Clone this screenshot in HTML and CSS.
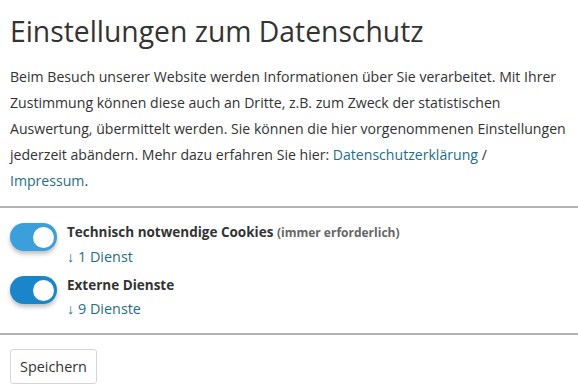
FILE: index.html
```html
<!DOCTYPE html>
<html lang="de">
<head>
<meta charset="utf-8"/>
<title>Einstellungen zum Datenschutz</title>
<link rel="stylesheet" href="styles.css">
</head>
<body>
  <div class="privacy">
    <div class="intro">
      <h1>Einstellungen zum Datenschutz</h1>
      <p>Beim Besuch unserer Website werden Informationen über Sie verarbeitet. Mit Ihrer Zustimmung können diese auch an Dritte, z.B. zum Zweck der statistischen Auswertung, übermittelt werden. Sie können die hier vorgenommenen Einstellungen jederzeit abändern. Mehr dazu erfahren Sie hier: <a href="#">Datenschutzerklärung</a> /<br><a href="#">Impressum</a>.</p>
    </div>

    <div class="groups">
      <div class="group">
        <span class="switch switch-light"><span class="knob"></span></span>
        <div class="group-text">
          <div class="group-title">Technisch notwendige Cookies <small>(immer erforderlich)</small></div>
          <a href="#" class="services">↓ 1 Dienst</a>
        </div>
      </div>
      <div class="group">
        <span class="switch"><span class="knob"></span></span>
        <div class="group-text">
          <div class="group-title">Externe Dienste</div>
          <a href="#" class="services">↓ 9 Dienste</a>
        </div>
      </div>
    </div>

    <div class="actions">
      <button class="save">Speichern</button>
    </div>
  </div>
</body>
</html>
```

FILE: styles.css
```css
html, body {
  margin: 0;
  background: #fff;
}
body {
  font-family: "Open Sans", "Liberation Sans", sans-serif;
  color: #333;
  font-size: 14.1px;
}
.intro {
  padding: 11px 10px 12px;
  border-bottom: 2px solid #b3b3b3;
}
h1 {
  font-weight: 400;
  font-size: 28.3px;
  margin: 0 0 13px;
  color: #333;
  line-height: 40px;
}
p {
  margin: 0;
  line-height: 26px;
}
a {
  color: #1f6e85;
  text-decoration: none;
}
.groups {
  padding: 12px 10px 12px;
  border-bottom: 2px solid #b3b3b3;
  display: flex;
  flex-direction: column;
  gap: 4px;
}
.group {
  display: flex;
  align-items: flex-start;
  gap: 10px;
}
.switch {
  width: 47px;
  height: 28px;
  border-radius: 14px;
  background: #1a85c8;
  display: flex;
  align-items: center;
  justify-content: flex-end;
  padding: 0 3px;
  box-sizing: border-box;
  box-shadow: 0 3px 4px rgba(0, 0, 0, 0.25);
  margin-top: 3px;
  flex-shrink: 0;
}
.switch-light {
  background: #3a9fdb;
}
.knob {
  width: 21px;
  height: 21px;
  border-radius: 50%;
  background: #fff;
}
.group-title {
  font-weight: 700;
  font-size: 13.5px;
  color: #333;
  line-height: 24px;
}
.group-title small {
  font-size: 12px;
  color: #666;
}
.services {
  display: block;
  font-size: 14.4px;
  line-height: 24px;
}
.actions {
  padding: 14px 10px;
}
.save {
  font-family: inherit;
  font-size: 14.4px;
  color: #333;
  background: #fff;
  border: 1px solid #d6d6d6;
  border-radius: 3px;
  padding: 7px 9px;
}
```
